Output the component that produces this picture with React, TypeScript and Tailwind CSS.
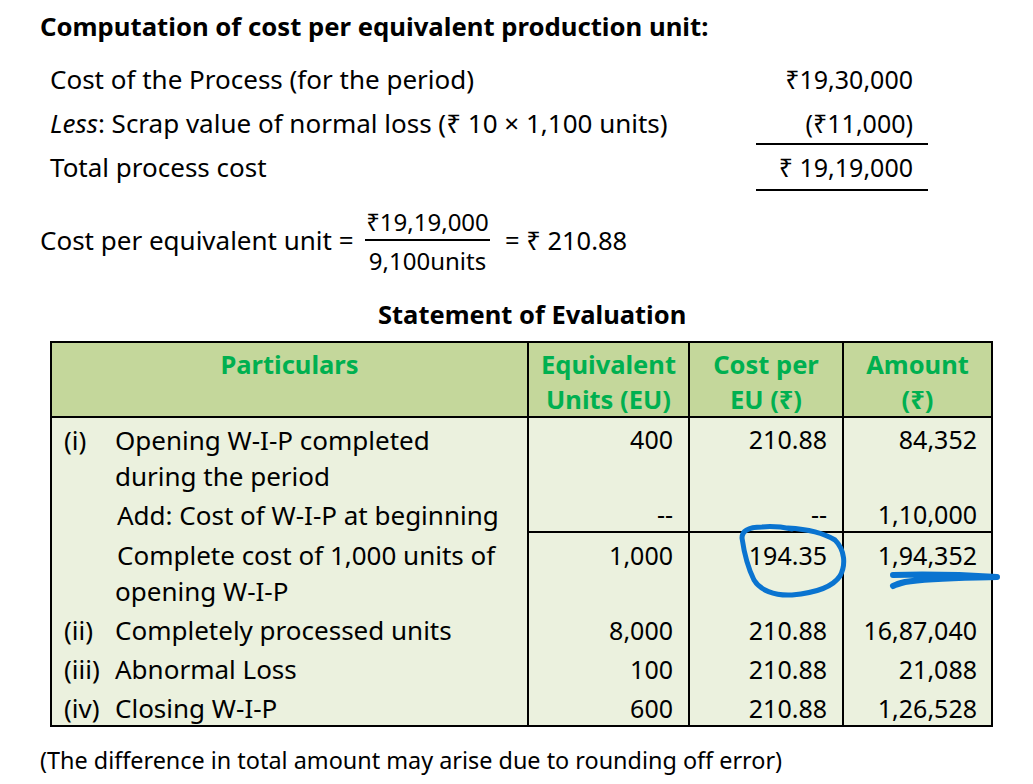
import React from "react";

const font = { fontFamily: '"Noto Sans", "Open Sans", "DejaVu Sans", sans-serif' };

function Num({ children }: { children?: React.ReactNode }) {
  return (
    <div className="h-[36px] pt-[1px] leading-[36px] text-right whitespace-nowrap text-[25px]">
      {children}
    </div>
  );
}

function Line({ label, children }: { label: string; children: React.ReactNode }) {
  return (
    <div className="flex h-[36px] pt-[1px] leading-[36px]">
      <div className="w-[51px] shrink-0">{label}</div>
      <div className="whitespace-nowrap">{children}</div>
    </div>
  );
}

export default function App() {
  return (
    <div
      className="relative w-[1033px] h-[784px] bg-white text-black text-[26px] overflow-hidden"
      style={font}
    >
      {/* Title */}
      <div className="h-[54px] flex items-center pl-[40px] font-bold text-[25.7px] leading-[36px] whitespace-nowrap">
        Computation of cost per equivalent production unit:
      </div>

      {/* Process cost rows */}
      <div className="ml-[50px] grid grid-cols-[706px_172px] leading-[36px]">
        <div className="h-[49px] flex items-center whitespace-nowrap">Cost of the Process (for the period)</div>
        <div className="h-[49px] flex items-center justify-end pr-[15px] text-[25px]">₹19,30,000</div>
        <div className="h-[42px] pb-[2px] flex items-center whitespace-nowrap">
          <span>
            <i>Less</i>: Scrap value of normal loss (₹ 10 × 1,100 units)
          </span>
        </div>
        <div className="h-[42px] flex items-center justify-end pr-[15px] border-b-2 border-black text-[25px]">
          (₹11,000)
        </div>
        <div className="h-[46px] pb-[2px] flex items-center">Total process cost</div>
        <div className="h-[46px] pb-[1px] flex items-center justify-end pr-[15px] border-b-2 border-black text-[25px]">
          ₹ 19,19,000
        </div>
      </div>

      {/* Cost per equivalent unit */}
      <div className="flex items-center pl-[40px] pt-[15px]">
        <div className="w-[325px] leading-[36px] whitespace-nowrap pb-[3px]">Cost per equivalent unit =</div>
        <div className="w-[125px] flex flex-col items-center text-[24px]">
          <div className="w-full text-center leading-[32px] h-[35px] border-b-2 border-black">₹19,19,000</div>
          <div className="w-full text-center leading-[32px] h-[32px] mt-[4px]">9,100units</div>
        </div>
        <div className="ml-[15px] leading-[36px] whitespace-nowrap text-[25.5px] pb-[3px]">= ₹ 210.88</div>
      </div>

      {/* Statement title */}
      <div className="mt-[20px] h-[36px] leading-[34px] pl-[378px] font-bold text-[25.5px] whitespace-nowrap">
        Statement of Evaluation
      </div>

      {/* Table */}
      <div className="mt-[8px] ml-[50px] w-[943px] border-2 border-black bg-[#ebf1de]">
        {/* Header */}
        <div className="grid grid-cols-[477px_161px_154px_147px] bg-[#c4d79b] border-b-2 border-black text-[#00b050] font-bold text-[25.5px] leading-[35px] h-[75px]">
          <div className="border-r-2 border-black pt-[4px] text-center">Particulars</div>
          <div className="border-r-2 border-black pt-[4px] text-center whitespace-nowrap">
            Equivalent
            <br />
            Units (EU)
          </div>
          <div className="border-r-2 border-black pt-[4px] text-center whitespace-nowrap">
            Cost per
            <br />
            EU (₹)
          </div>
          <div className="pt-[4px] text-center">
            Amount
            <br />
            (₹)
          </div>
        </div>

        {/* Body */}
        <div className="grid grid-cols-[477px_161px_154px_147px] leading-[36px]">
          {/* Section A */}
          <div className="h-[113px] border-r-2 border-black pt-[4px] pl-[12px]">
            <div className="flex">
              <div className="w-[51px] shrink-0">(i)</div>
              <div className="whitespace-nowrap">
                Opening W-I-P completed
                <br />
                during the period
              </div>
            </div>
            <div className="mt-[3px] pl-[53px] whitespace-nowrap">Add: Cost of W-I-P at beginning</div>
          </div>
          <div className="h-[113px] border-r-2 border-black pt-[2px] pr-[15px] flex flex-col justify-between">
            <Num>400</Num>
            <Num>--</Num>
          </div>
          <div className="h-[113px] border-r-2 border-black pt-[2px] pr-[15px] flex flex-col justify-between">
            <Num>210.88</Num>
            <Num>--</Num>
          </div>
          <div className="h-[113px] pt-[2px] pr-[14px] flex flex-col justify-between">
            <Num>84,352</Num>
            <Num>1,10,000</Num>
          </div>

          {/* Section B */}
          <div className="h-[80px] border-r-2 border-black pt-[6px] pl-[63px] whitespace-nowrap">
            <div className="pl-[2px]">Complete cost of 1,000 units of</div>
            <div>opening W-I-P</div>
          </div>
          <div className="h-[80px] border-r-2 border-t-2 border-black pt-[3px] pr-[15px]">
            <Num>1,000</Num>
          </div>
          <div className="h-[80px] border-r-2 border-t-2 border-black pt-[3px] pr-[15px]">
            <Num>194.35</Num>
          </div>
          <div className="h-[80px] border-t-2 border-black pt-[3px] pr-[14px]">
            <Num>1,94,352</Num>
          </div>

          {/* Section C */}
          <div className="h-[114px] border-r-2 border-black pl-[12px] flex flex-col gap-[3px]">
            <Line label="(ii)">Completely processed units</Line>
            <Line label="(iii)">Abnormal Loss</Line>
            <Line label="(iv)">Closing W-I-P</Line>
          </div>
          <div className="h-[114px] border-r-2 border-black pr-[15px] flex flex-col gap-[3px]">
            <Num>8,000</Num>
            <Num>100</Num>
            <Num>600</Num>
          </div>
          <div className="h-[114px] border-r-2 border-black pr-[15px] flex flex-col gap-[3px]">
            <Num>210.88</Num>
            <Num>210.88</Num>
            <Num>210.88</Num>
          </div>
          <div className="h-[114px] pr-[14px] flex flex-col gap-[3px]">
            <Num>16,87,040</Num>
            <Num>21,088</Num>
            <Num>1,26,528</Num>
          </div>
        </div>
      </div>

      {/* Footnote */}
      <div className="mt-[15px] pl-[40px] h-[36px] leading-[36px] text-[23.4px] whitespace-nowrap">
        (The difference in total amount may arise due to rounding off error)
      </div>

      {/* Pen annotations */}
      <svg
        className="absolute left-0 top-0 pointer-events-none"
        width="1033"
        height="784"
        viewBox="0 0 1033 784"
      >
        <path
          d="M788 528 C805 529 822 532 835 540 C845 550 846 565 840 576 C832 588 815 593 792 595 C774 596 760 590 754 580 C748 568 744 552 742 538 C742 530 750 527 762 527 C772 526 782 527 792 529"
          fill="none"
          stroke="#0a74d0"
          strokeWidth="5"
          strokeLinecap="round"
          strokeLinejoin="round"
        />
        <path
          d="M893 575 C930 574 965 575 997 577 C965 578 930 578 905 582 C897 584 893 586 893 586"
          fill="none"
          stroke="#0a74d0"
          strokeWidth="6"
          strokeLinecap="round"
          strokeLinejoin="round"
        />
      </svg>
    </div>
  );
}
